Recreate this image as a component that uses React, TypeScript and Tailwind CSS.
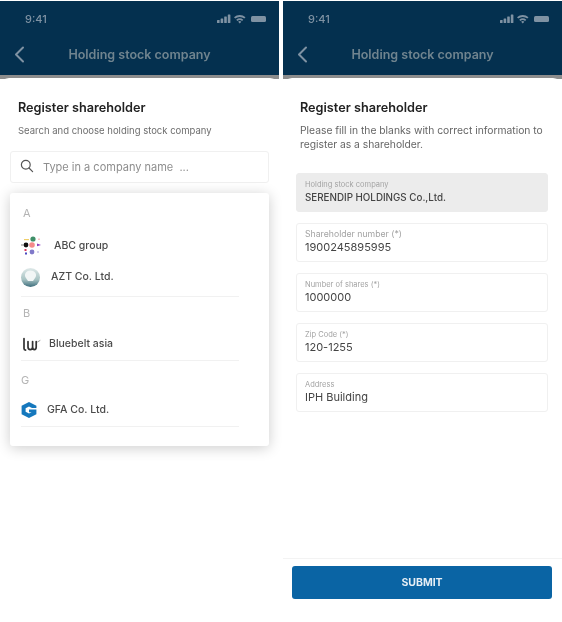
import React from 'react';

const sans = "font-['Inter','Liberation_Sans',sans-serif]";

const StatusBar = ({ timeClass }: { timeClass: string }) => (
  <div className="flex h-[36px] items-center justify-between">
    <span className={`text-[11px] font-medium leading-[14px] text-[#7f92a3] ${timeClass}`}>9:41</span>
    <svg width="50" height="10" viewBox="0 0 50 10" className="mr-[12px]" fill="#7f92a3">
      <rect x="0" y="6" width="2.6" height="3" rx="0.5" />
      <rect x="3.6" y="4.5" width="2.6" height="4.5" rx="0.5" />
      <rect x="7.2" y="2.5" width="2.6" height="6.5" rx="0.5" />
      <rect x="10.8" y="0.5" width="2.6" height="8.5" rx="0.5" />
      <path d="M17 3.2a9 9 0 0 1 11.5 0l-1.2 1.4a7 7 0 0 0-9.1 0zM19.2 5.7a5.6 5.6 0 0 1 7.1 0l-1.2 1.4a3.6 3.6 0 0 0-4.7 0zM22.75 9.4l-1.6-1.7a2.4 2.4 0 0 1 3.2 0z" />
      <rect x="34" y="2" width="15" height="6" rx="1.5" />
    </svg>
  </div>
);

const NavBar = ({ backClass }: { backClass: string }) => (
  <div className="relative flex h-[38px] items-start justify-center pt-[9px]">
    <svg width="11" height="17" viewBox="0 0 11 17" fill="none" className={`absolute top-[9px] ${backClass}`}>
      <path d="M9 1.5 2 8.5l7 7" stroke="#7f92a3" strokeWidth="2" strokeLinecap="round" strokeLinejoin="round" />
    </svg>
    <span className="text-[12.5px] font-semibold leading-[18px] text-[#70848f]">Holding stock company</span>
  </div>
);

const Header = ({ timeClass, backClass }: { timeClass: string; backClass: string }) => (
  <div className="mt-[1px] bg-[#04304f]">
    <StatusBar timeClass={timeClass} />
    <NavBar backClass={backClass} />
  </div>
);

const AbcLogo = () => (
  <svg width="22" height="20" viewBox="0 0 22 20">
    <circle cx="12" cy="3" r="2.6" fill="#3f8f68" />
    <rect x="3" y="3" width="5" height="1.2" fill="#f0cf6a" />
    <circle cx="5" cy="9" r="2.4" fill="#111" />
    <rect x="0" y="8.4" width="3" height="1.2" fill="#999" />
    <circle cx="11" cy="9" r="2.8" fill="#f58a8a" />
    <path d="M16 7.5l4 1.5-4 1.2z" fill="#8a3fc0" />
    <rect x="17" y="2.6" width="2" height="1.2" fill="#f4b8b8" />
    <circle cx="11" cy="16" r="2.4" fill="#8079c9" />
    <rect x="3.5" y="13" width="2" height="2" fill="#d9345a" />
    <rect x="4" y="16.5" width="2" height="2" fill="#4a4ac0" />
    <rect x="16" y="15.4" width="2" height="1.2" fill="#b9b4e0" />
  </svg>
);

const AztLogo = () => (
  <svg width="19" height="19" viewBox="0 0 19 19">
    <defs>
      <linearGradient id="azt" x1="0" y1="0" x2="0" y2="1">
        <stop offset="0" stopColor="#dfe9e9" />
        <stop offset="0.6" stopColor="#a9c4c4" />
        <stop offset="1" stopColor="#3d6d7c" />
      </linearGradient>
    </defs>
    <circle cx="9.5" cy="9.5" r="9.5" fill="url(#azt)" />
    <path d="M9.5 2.5c4.2 0 6.4 3.2 5.2 6.5l-2.7 4h-5L4.3 9c-1.2-3.3 1-6.5 5.2-6.5z" fill="#f2f6f6" />
  </svg>
);

const BluebeltLogo = () => (
  <svg width="20" height="15" viewBox="0 0 20 15" fill="none">
    <path d="M3 1.5v10c0 1.2.6 1.6 1.6 1.6" stroke="#333" strokeWidth="1.7" strokeLinecap="round" />
    <path d="M7 4.5v5.5c0 3.4 4.6 3.4 4.6 0V4.5M11.6 10c0 3.4 3.6 3.4 3.6 0V4.5" stroke="#333" strokeWidth="1.7" strokeLinecap="round" />
    <path d="M16.5 5l2.5-1.5" stroke="#9a9a9a" strokeWidth="1" strokeLinecap="round" />
  </svg>
);

const GfaLogo = () => (
  <svg width="16" height="16" viewBox="0 0 16 16">
    <path d="M8 0l7.4 3.8V6h-4.4L8 4.4 4.6 6.2v3.6L8 11.6l2.6-1.4H8V7.6h7.4v4.6L8 16 .6 12.2V3.8z" fill="#1578bd" />
  </svg>
);

const Letter = ({ children, className }: { children: string; className: string }) => (
  <div className={`text-[11px] leading-[14px] text-[#b4b4b4] ${className}`}>{children}</div>
);

const Company = ({ logo, name, className }: { logo: React.ReactNode; name: string; className: string }) => (
  <div className={`flex items-center ${className}`}>
    {logo}
    <span className="text-[10.5px] font-medium text-[#4b4b4b]">{name}</span>
  </div>
);

const SearchScreen = () => (
  <div className="flex h-full w-[279px] flex-col">
    <Header timeClass="ml-[25px]" backClass="left-[14px]" />
    <div className="h-[4px] bg-[#8d8d8d]" />
    <div className="-mt-[1px] flex flex-1 flex-col rounded-t-[9px] bg-white px-[10px]">
      <h2 className="ml-[8px] mt-[21px] text-[12.7px] font-semibold leading-[18px] text-[#222]">Register shareholder</h2>
      <p className="ml-[8px] mt-[7px] text-[9.5px] leading-[14px] text-[#6e6e6e]">Search and choose holding stock company</p>
      <div className="mt-[13px] flex h-[32px] items-center rounded-[3px] border border-[#f0f0f0] pl-[9px]">
        <svg width="14" height="14" viewBox="0 0 14 14" fill="none" className="-mt-[2px]">
          <circle cx="5.8" cy="5.8" r="4.4" stroke="#555" strokeWidth="1.2" />
          <path d="M9 9l3.6 3.6" stroke="#555" strokeWidth="1.2" strokeLinecap="round" />
        </svg>
        <span className="ml-[9px] text-[11px] text-[#8e8e8e]">Type in a company name &nbsp;...</span>
      </div>
      <div className="mt-[10px] h-[253px] rounded-[3px] bg-white pl-[11px] pr-[30px] shadow-[0_2px_14px_rgba(0,0,0,0.2)]">
        <Letter className="ml-[2px] pt-[13px]">A</Letter>
        <Company className="mt-[16px] h-[20px]" logo={<span className="w-[33px]"><AbcLogo /></span>} name="ABC group" />
        <Company className="mt-[10px] h-[22px]" logo={<span className="w-[30px]"><AztLogo /></span>} name="AZT Co. Ltd." />
        <div className="mt-[8px] h-px bg-[#f1f1f1]" />
        <Letter className="ml-[2px] mt-[9px]">B</Letter>
        <Company className="mt-[15px] h-[18px]" logo={<span className="w-[28px]"><BluebeltLogo /></span>} name="Bluebelt asia" />
        <div className="mt-[7px] h-px bg-[#f1f1f1]" />
        <Letter className="mt-[12px]">G</Letter>
        <Company className="mt-[14px] h-[18px]" logo={<span className="w-[26px]"><GfaLogo /></span>} name="GFA Co. Ltd." />
        <div className="mt-[7px] h-px bg-[#f1f1f1]" />
      </div>
    </div>
  </div>
);

const Field = ({ label, value, filled, small }: { label: string; value: string; filled?: boolean; small?: boolean }) => (
  <div className={`flex h-[39px] flex-col justify-center rounded-[3px] border px-[8px] pb-[2px] ${filled ? 'border-[#ececec] bg-[#ececec]' : 'border-[#f0f0f0] bg-white'}`}>
    <span className={`leading-[11px] text-[#a3a3a3] ${small ? 'text-[7.5px]' : 'text-[8.7px]'}`}>{label}</span>
    <span className={`leading-[15px] text-[#444] ${filled ? 'text-[9.8px] font-medium' : 'text-[11px]'}`}>{value}</span>
  </div>
);

const FormScreen = () => (
  <div className="flex h-full w-[279px] flex-col">
    <Header timeClass="ml-[25px]" backClass="left-[14px]" />
    <div className="h-[4px] bg-[#8d8d8d]" />
    <div className="-mt-[1px] flex flex-1 flex-col rounded-t-[9px] bg-white">
      <div className="flex-1 pl-[13px] pr-[14px]">
        <h2 className="ml-[4px] mt-[21px] text-[12.7px] font-semibold leading-[18px] text-[#222]">Register shareholder</h2>
        <p className="ml-[4px] mt-[6px] text-[10.3px] leading-[14px] text-[#666]">
          Please fill in the blanks with correct information to register as a shareholder.
        </p>
        <div className="mt-[22px] flex flex-col gap-[11px]">
          <Field filled small label="Holding stock company" value="SERENDIP HOLDINGS Co.,Ltd." />
          <Field label="Shareholder number (*)" value="1900245895995" />
          <Field small label="Number of shares (*)" value="1000000" />
          <Field small label="Zip Code (*)" value="120-1255" />
          <Field small label="Address" value="IPH Building" />
        </div>
      </div>
      <div className="h-[64px] border-t border-[#f3f3f3] pl-[9px] pr-[10px] pt-[7px]">
        <button className="h-[33px] w-full rounded-[3px] bg-[#0a64a4] text-[10.5px] font-bold text-[#e6eef5]">SUBMIT</button>
      </div>
    </div>
  </div>
);

export default function App() {
  return (
    <div className={`flex h-[622px] w-[562px] gap-[4px] overflow-hidden bg-white ${sans} blur-[0.4px]`}>
      <SearchScreen />
      <FormScreen />
    </div>
  );
}
